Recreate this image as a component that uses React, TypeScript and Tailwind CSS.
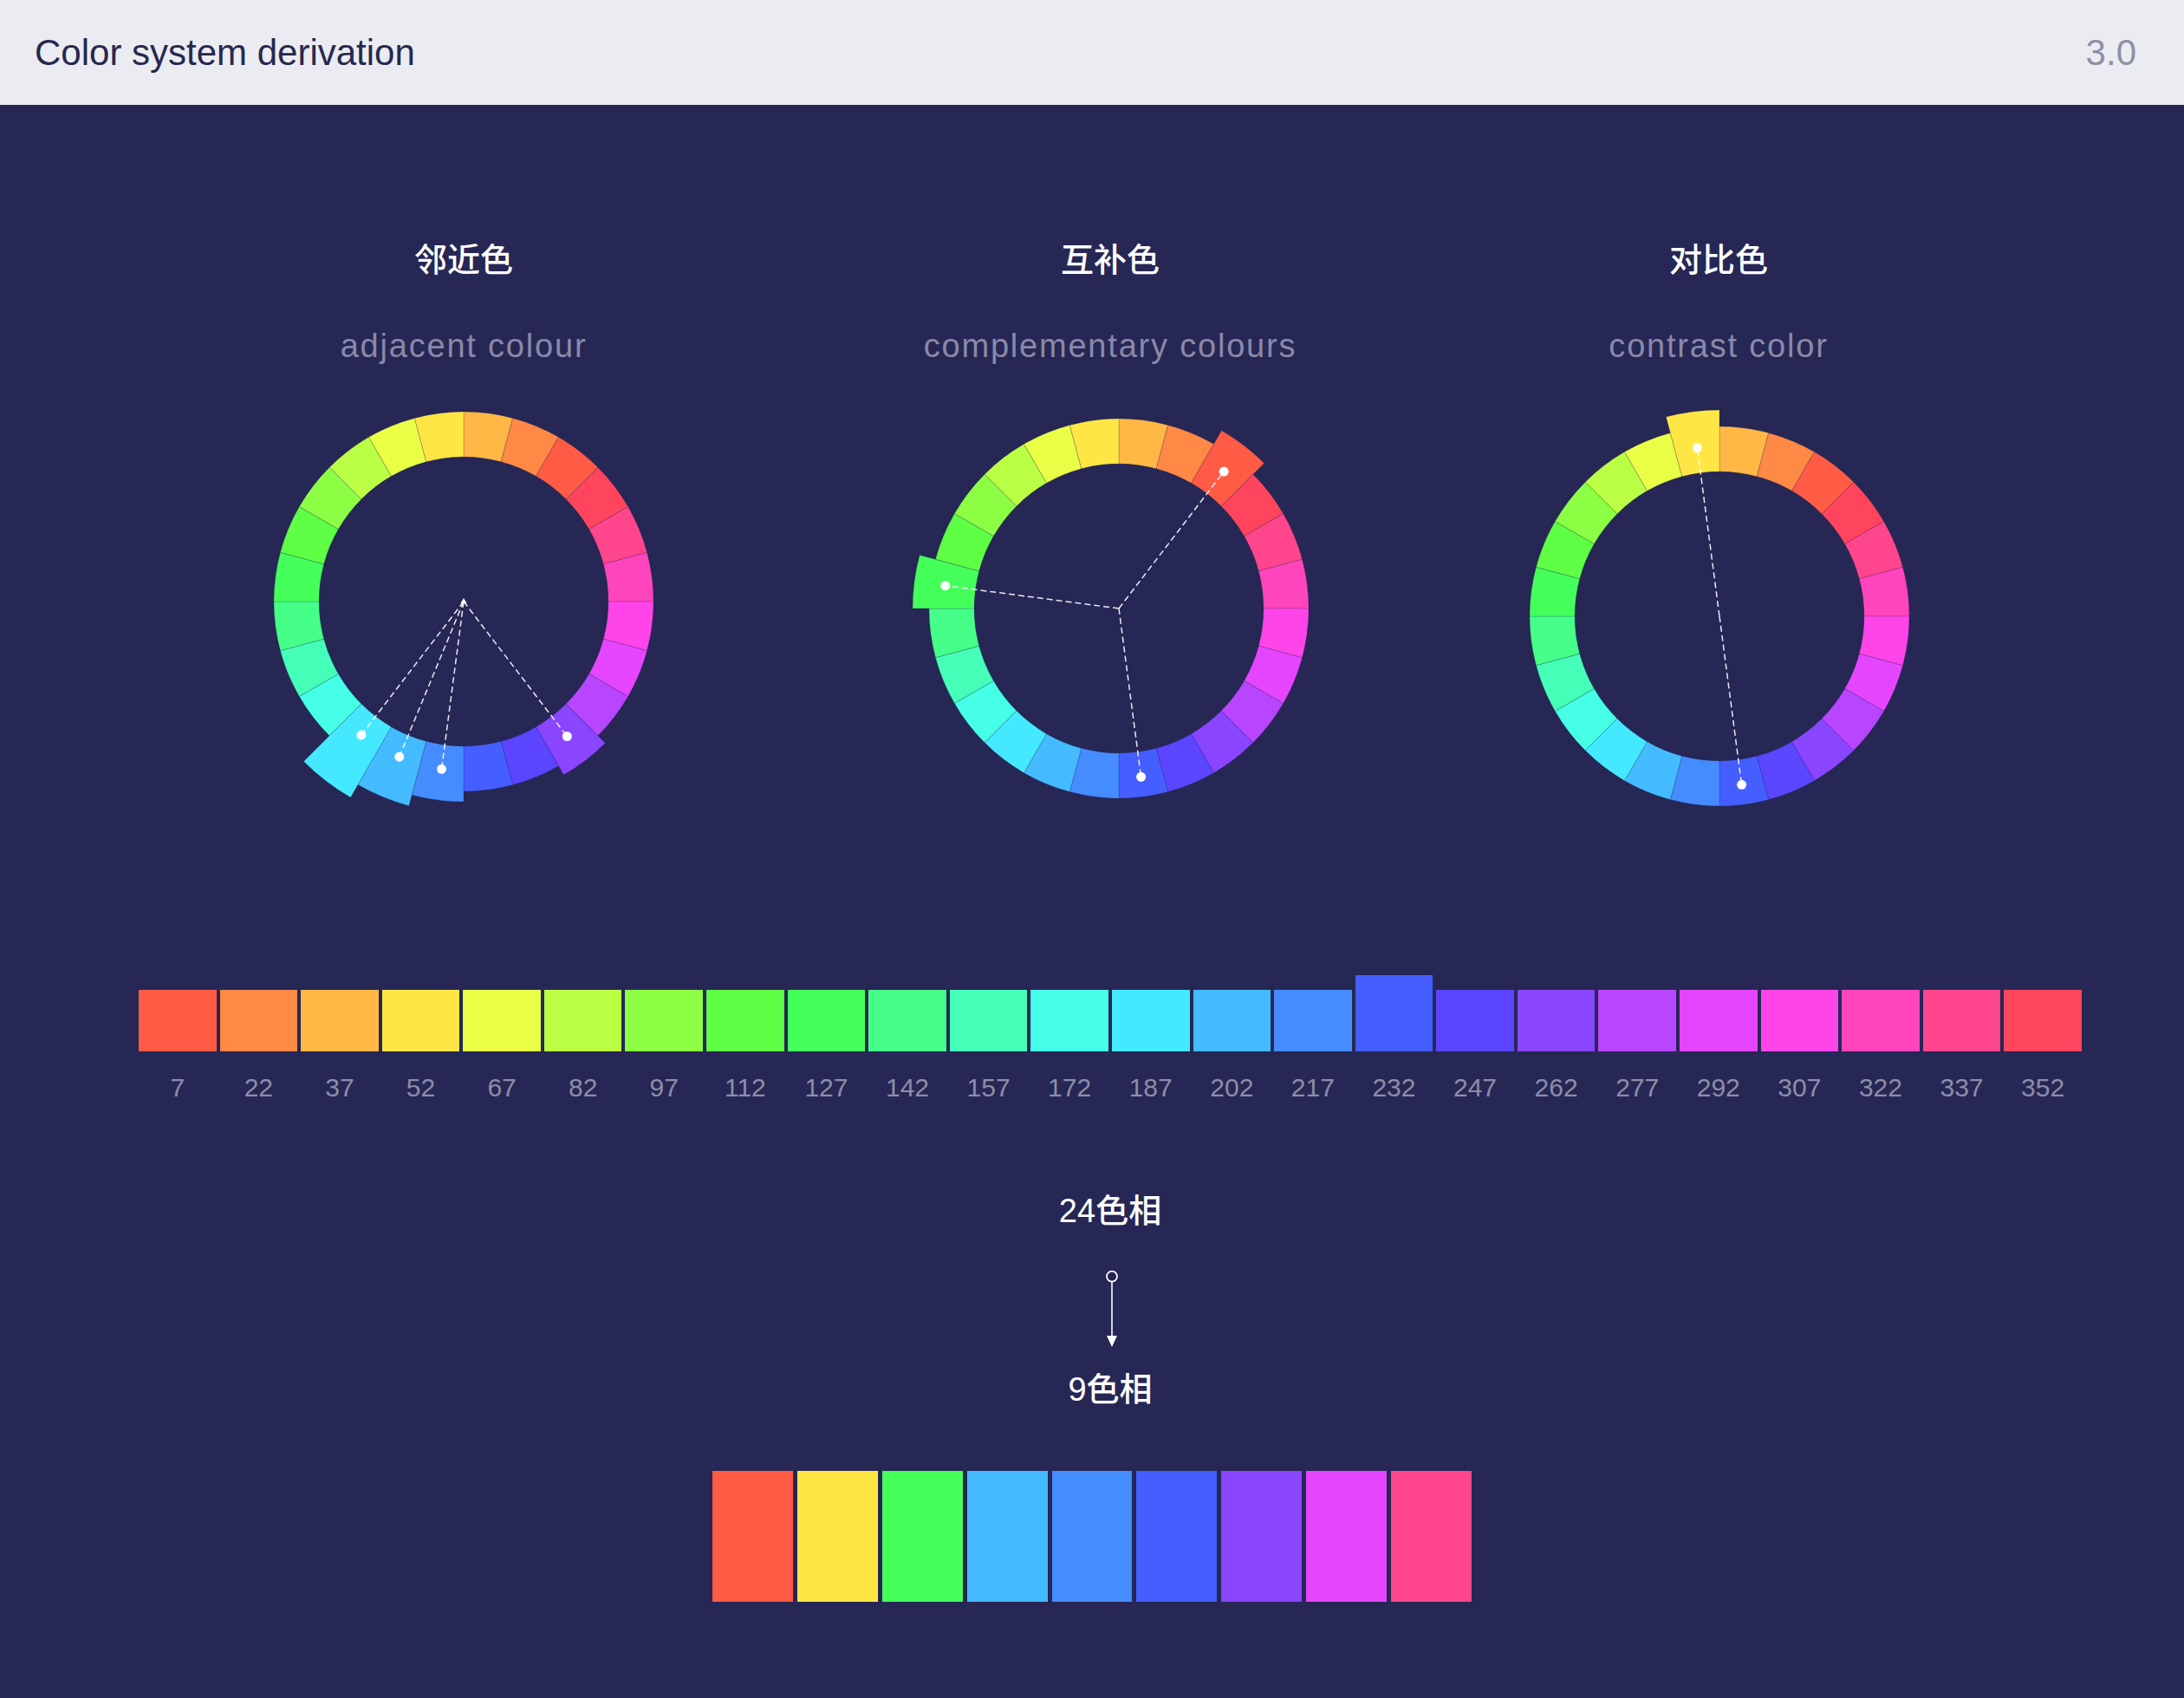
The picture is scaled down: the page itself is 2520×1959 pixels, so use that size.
import React from "react";

const HUES = [
  { hue: 7, hex: "#ff5b45", bg: "bg-[#ff5b45]" },
  { hue: 22, hex: "#ff8945", bg: "bg-[#ff8945]" },
  { hue: 37, hex: "#ffb845", bg: "bg-[#ffb845]" },
  { hue: 52, hex: "#ffe645", bg: "bg-[#ffe645]" },
  { hue: 67, hex: "#e9ff45", bg: "bg-[#e9ff45]" },
  { hue: 82, hex: "#bbff45", bg: "bg-[#bbff45]" },
  { hue: 97, hex: "#8cff45", bg: "bg-[#8cff45]" },
  { hue: 112, hex: "#5eff45", bg: "bg-[#5eff45]" },
  { hue: 127, hex: "#45ff5b", bg: "bg-[#45ff5b]" },
  { hue: 142, hex: "#45ff89", bg: "bg-[#45ff89]" },
  { hue: 157, hex: "#45ffb8", bg: "bg-[#45ffb8]" },
  { hue: 172, hex: "#45ffe6", bg: "bg-[#45ffe6]" },
  { hue: 187, hex: "#45e9ff", bg: "bg-[#45e9ff]" },
  { hue: 202, hex: "#45bbff", bg: "bg-[#45bbff]" },
  { hue: 217, hex: "#458cff", bg: "bg-[#458cff]" },
  { hue: 232, hex: "#455eff", bg: "bg-[#455eff]" },
  { hue: 247, hex: "#5b45ff", bg: "bg-[#5b45ff]" },
  { hue: 262, hex: "#8945ff", bg: "bg-[#8945ff]" },
  { hue: 277, hex: "#b845ff", bg: "bg-[#b845ff]" },
  { hue: 292, hex: "#e645ff", bg: "bg-[#e645ff]" },
  { hue: 307, hex: "#ff45e9", bg: "bg-[#ff45e9]" },
  { hue: 322, hex: "#ff45bb", bg: "bg-[#ff45bb]" },
  { hue: 337, hex: "#ff458c", bg: "bg-[#ff458c]" },
  { hue: 352, hex: "#ff455e", bg: "bg-[#ff455e]" },
];

const NINE = [
  "bg-[#ff5b45]",
  "bg-[#ffe645]",
  "bg-[#45ff5b]",
  "bg-[#45bbff]",
  "bg-[#458cff]",
  "bg-[#455eff]",
  "bg-[#8945ff]",
  "bg-[#e645ff]",
  "bg-[#ff458c]",
];

type Dot = { angle: number; r: number };

function Wheel({
  cx,
  cy,
  ext,
  dots,
  marker,
}: {
  cx: number;
  cy: number;
  ext: Record<number, number>;
  dots: Dot[];
  marker?: boolean;
}) {
  const R = 219;
  const r0 = 167;
  const pt = (a: number, rad: number) => {
    const t = (a * Math.PI) / 180;
    return [cx + rad * Math.sin(t), cy - rad * Math.cos(t)];
  };
  const f = (n: number) => n.toFixed(2);
  const segs = Array.from({ length: 24 }, (_, i) => {
    const a1 = i * 15;
    const a2 = (i + 1) * 15;
    const Ro = ext[i] ?? R;
    const hue = (((37 - 15 * i) % 360) + 720) % 360;
    const k = (hue - 7) / 15;
    const [x1, y1] = pt(a1, Ro);
    const [x2, y2] = pt(a2, Ro);
    const [x3, y3] = pt(a2, r0);
    const [x4, y4] = pt(a1, r0);
    const d = `M${f(x1)} ${f(y1)} A${Ro} ${Ro} 0 0 1 ${f(x2)} ${f(y2)} L${f(x3)} ${f(y3)} A${r0} ${r0} 0 0 0 ${f(x4)} ${f(y4)} Z`;
    return { d, color: HUES[k].hex, i };
  });
  return (
    <svg width="600" height="520" viewBox="0 0 600 520" className="mt-[22px] block">
      {segs.map((s) => (
        <path key={s.i} d={s.d} fill={s.color} stroke="rgba(30,32,80,0.35)" strokeWidth="0.6" />
      ))}
      {dots.map((d, j) => {
        const [x, y] = pt(d.angle, d.r);
        return (
          <line
            key={"l" + j}
            x1={cx}
            y1={cy}
            x2={x}
            y2={y}
            stroke="#ffffff"
            strokeOpacity="0.9"
            strokeWidth="1.5"
            strokeDasharray="7 4"
          />
        );
      })}
      {dots.map((d, j) => {
        const [x, y] = pt(d.angle, d.r);
        return <circle key={"c" + j} cx={x} cy={y} r="5.5" fill="#ffffff" />;
      })}
      {marker && (
        <polygon
          points={`${cx},${cy - 4} ${cx - 3.5},${cy + 2} ${cx + 3.5},${cy + 2}`}
          fill="#ffffff"
        />
      )}
    </svg>
  );
}

function Column({
  title,
  subtitle,
  className,
  children,
}: {
  title: string;
  subtitle: string;
  className: string;
  children: React.ReactNode;
}) {
  return (
    <div className={"w-[600px] flex flex-col items-center " + className}>
      <div className="text-[38px] leading-none font-medium text-white">{title}</div>
      <div className="mt-[61px] text-[38px] leading-none tracking-[1.8px] text-[#8a89a8]">
        {subtitle}
      </div>
      {children}
    </div>
  );
}

export default function App() {
  return (
    <div className="w-[2520px] min-h-[1959px] bg-[#262755] font-['Liberation_Sans','Noto_Sans_CJK_SC',sans-serif]">
      <header className="h-[121px] bg-[#ebecf1] flex items-center justify-between pl-[40px] pr-[55px]">
        <span className="text-[42px] leading-none text-[#27284f]">Color system derivation</span>
        <span className="text-[42px] leading-none text-[#8e8fa8]">3.0</span>
      </header>

      <main className="pt-[160px] pb-[111px] flex flex-col">
        <div className="flex">
          <Column title="邻近色" subtitle="adjacent colour" className="ml-[235px]">
            <Wheel
              cx={300}
              cy={254}
              ext={{ 14: 261, 13: 244, 12: 231, 9: 231 }}
              dots={[
                { angle: 217.5, r: 194 },
                { angle: 202.5, r: 194 },
                { angle: 187.5, r: 195 },
                { angle: 142.5, r: 196 },
              ]}
              marker
            />
          </Column>
          <Column title="互补色" subtitle="complementary colours" className="ml-[146px]">
            <Wheel
              cx={310}
              cy={262}
              ext={{ 2: 237, 18: 238 }}
              dots={[
                { angle: 37.5, r: 199 },
                { angle: 277.5, r: 202 },
                { angle: 172.5, r: 196 },
              ]}
            />
          </Column>
          <Column title="对比色" subtitle="contrast color" className="ml-[102px]">
            <Wheel
              cx={301}
              cy={271}
              ext={{ 23: 238 }}
              dots={[
                { angle: 352.5, r: 196 },
                { angle: 172.5, r: 196 },
              ]}
            />
          </Column>
        </div>

        <div className="mt-[165px] ml-[160px] w-[2242px] h-[88px] flex items-end gap-[4px]">
          {HUES.map((h) => (
            <div
              key={h.hue}
              className={
                "flex-1 " + h.bg + " " + (h.hue === 232 ? "h-[88px]" : "h-[71px]")
              }
            />
          ))}
        </div>
        <div className="mt-[27px] ml-[160px] w-[2242px] flex gap-[4px]">
          {HUES.map((h) => (
            <div key={h.hue} className="flex-1 text-center text-[30px] leading-[30px] text-[#8e8da9]">
              {h.hue}
            </div>
          ))}
        </div>

        <div className="mt-[108px] ml-[160px] w-[2242px] text-center text-[38px] leading-none font-medium text-white">
          24色相
        </div>
        <div className="mt-[48px] ml-[160px] w-[2242px] flex justify-center">
          <svg width="20" height="92" viewBox="0 0 20 92" className="block ml-[4px]">
            <circle cx="10" cy="8.6" r="6" fill="none" stroke="#ffffff" strokeWidth="1.8" />
            <line x1="10" y1="14.6" x2="10" y2="79" stroke="#ffffff" strokeWidth="1.6" />
            <polygon points="4,77 16,77 10,90" fill="#ffffff" />
          </svg>
        </div>
        <div className="mt-[28px] ml-[160px] w-[2242px] text-center text-[38px] leading-none font-medium text-white">
          9色相
        </div>

        <div className="mt-[75px] ml-[822px] w-[876px] h-[151px] flex gap-[5px]">
          {NINE.map((c) => (
            <div key={c} className={"flex-1 " + c} />
          ))}
        </div>
      </main>
    </div>
  );
}
